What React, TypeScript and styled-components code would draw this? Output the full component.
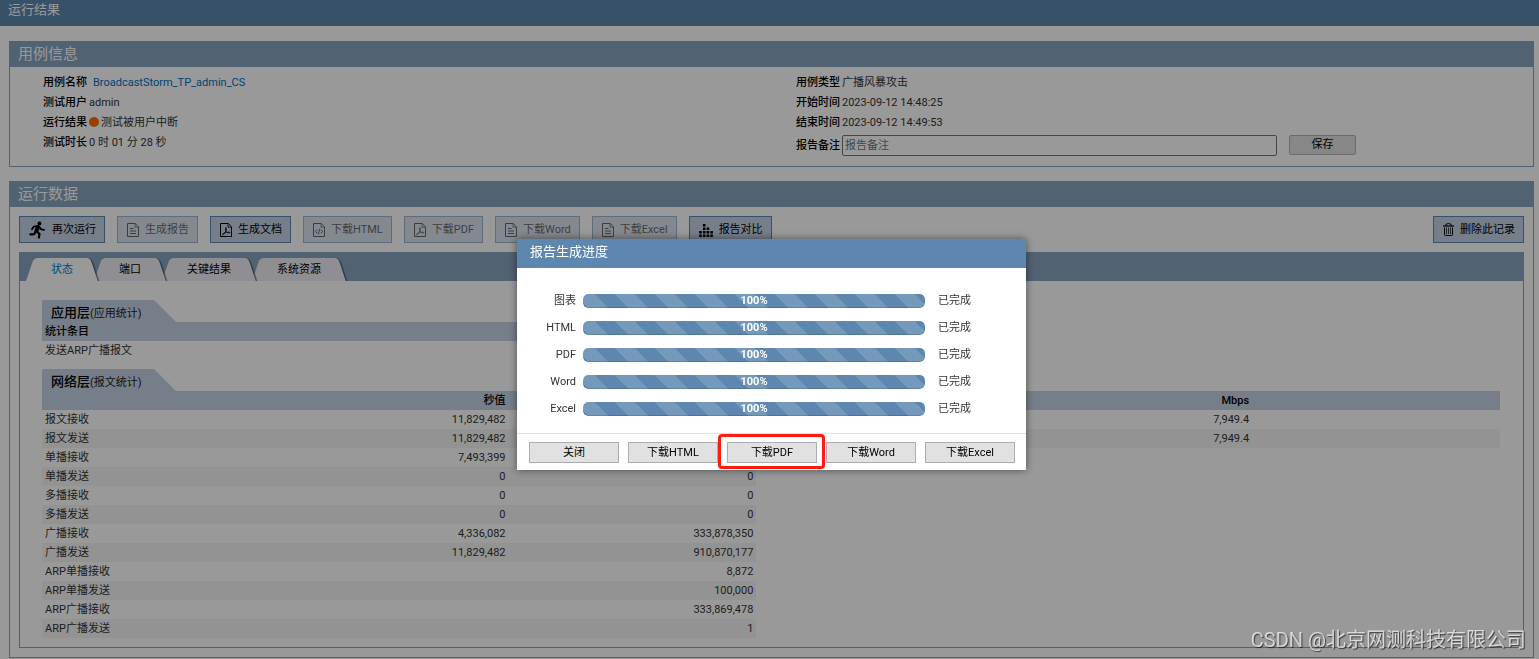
import React from 'react';
import styled, { createGlobalStyle, css } from 'styled-components';

const GlobalStyle = createGlobalStyle`
  *, *::before, *::after { box-sizing: border-box; }
  body {
    margin: 0;
    background: #fff;
    color: #333;
    font-family: Roboto, "Noto Sans CJK SC", sans-serif;
    font-size: 11px;
    line-height: 19px;
  }
  button, input { font: inherit; color: inherit; }
`;

const TopBar = styled.header`
  height: 26px;
  padding: 0 8px;
  background: #5d87af;
`;

const PageTitle = styled.h1`
  margin: 0;
  font-size: 13px;
  font-weight: 400;
  line-height: 20px;
  color: #fff;
`;

const Page = styled.main`
  display: flex;
  flex-direction: column;
  gap: 14px;
  padding: 15px 5px 1px 9px;
`;

const Panel = styled.section`
  border: 1px solid #87a3c0;
`;

const PanelTitle = styled.h2`
  margin: 0;
  padding: 0 8px;
  font-size: 15px;
  font-weight: 400;
  line-height: 25px;
  color: #fff;
  background: #87a3c0;
`;

const InfoGrid = styled.div`
  display: grid;
  grid-template-columns: 1fr 1fr;
  column-gap: 16px;
  padding: 5px 0 8px 33px;
`;

const InfoColumn = styled.div`
  display: flex;
  flex-direction: column;
`;

const InfoRow = styled.div`
  display: flex;
  align-items: center;
  gap: 2px;
  min-height: 20px;
  white-space: nowrap;
`;

const InfoLabel = styled.label`
  font-weight: 500;
  color: #000;
`;

const CaseLink = styled.a`
  padding-left: 4px;
  color: #0070c0;
  text-decoration: none;
`;

const StatusDot = styled.span`
  width: 10px;
  height: 10px;
  border-radius: 50%;
  background: #ff6a00;
`;

const NoteRow = styled(InfoRow)`
  min-height: 26px;
`;

const NoteInput = styled.input`
  flex: 0 1 435px;
  min-width: 0;
  height: 21px;
  padding: 0 2px;
  border: 1px solid #767676;
  border-radius: 2px;
  background: #fff;
  &::placeholder { color: #757575; opacity: 1; }
`;

const SaveButton = styled.button`
  width: 67px;
  height: 20px;
  margin-left: 10px;
  padding: 0;
  border: 1px solid #b2b2b2;
  border-radius: 2px;
  background: #e1e1e1;
  color: #000;
  line-height: 18px;
`;

const PanelBody = styled.div`
  padding: 9px;
`;

const Toolbar = styled.div`
  display: flex;
  gap: 12px;
  margin-bottom: 9px;
`;

const ToolButton = styled.button`
  display: flex;
  align-items: center;
  gap: 6px;
  height: 27px;
  padding: 0 8px 0 9px;
  border: 1px solid #5d87af;
  background: #c5d2e6;
  color: #000;
  white-space: nowrap;
  &:disabled { opacity: 0.6; }
  &:last-child { margin-left: auto; }
`;

const TabPanel = styled.div`
  border: 1px solid #87a3c0;
`;

const TabBar = styled.div`
  display: flex;
  align-items: flex-end;
  height: 28px;
  padding-left: 6px;
  background: #87a3c0;
`;

const Tab = styled.button<{ $active?: boolean; $order: number }>`
  display: flex;
  position: relative;
  z-index: ${p => p.$order};
  height: 23px;
  padding: 0;
  border: 0;
  background: none;
  color: ${p => (p.$active ? '#0078cc' : '#000')};
  --tab: ${p => (p.$active ? '#fff' : '#eeeff5')};
  & + & { margin-left: -5px; }
  svg { display: block; flex: none; overflow: visible; }
`;

const TabText = styled.span`
  padding: 2px 14px 2px 13px;
  line-height: 19px;
  background: var(--tab);
`;

const TabContent = styled.div`
  display: flex;
  flex-direction: column;
  gap: 9px;
  padding: 19px 23px 9px 22px;
`;

const StatBlock = styled.section<{ $half?: boolean }>`
  width: ${p => (p.$half ? '49%' : '100%')};
`;

const StatHeading = styled.h3`
  width: 134px;
  height: 22px;
  margin: 0;
  padding: 3px 0 0 9px;
  border-top-left-radius: 2px;
  background: #c5d2e6;
  clip-path: polygon(0 0, 112px 0, 100% 100%, 0 100%);
  font-size: 13px;
  font-weight: 500;
  line-height: 20px;
  color: #000;
  white-space: nowrap;
  small { font-size: 11px; font-weight: 400; color: #222; }
`;

const StatTable = styled.table`
  width: 100%;
  border-collapse: collapse;
  table-layout: fixed;
`;

const Col = styled.col<{ $share: number }>`
  width: ${p => p.$share}%;
`;

const cell = css`
  height: 19px;
  padding: 0 3px;
  line-height: 19px;
  text-align: right;
  &:first-child { text-align: left; }
`;

const HeadCell = styled.th`
  ${cell}
  background: #c5d2e6;
  font-weight: 500;
  color: #000;
`;

const Cell = styled.td<{ $striped: boolean }>`
  ${cell}
  background: ${p => (p.$striped ? '#f5f5f5' : 'transparent')};
`;

const Overlay = styled.div`
  position: fixed;
  inset: 0;
  z-index: 20;
  display: flex;
  justify-content: center;
  align-items: flex-start;
  padding: 239px 0 0 4px;
  background: rgba(0, 0, 0, 0.4);
`;

const Dialog = styled.div`
  width: 509px;
  background: #fff;
  box-shadow: 0 0 8px rgba(0, 0, 0, 0.5);
`;

const DialogTitle = styled.h2`
  margin: 0;
  padding: 0 13px;
  font-size: 13px;
  font-weight: 400;
  line-height: 26px;
  height: 29px;
  color: #fff;
  background: #5d87af;
`;

const ProgressList = styled.div`
  display: flex;
  flex-direction: column;
  gap: 8px;
  padding: 23px 0 15px;
`;

const ProgressRow = styled.div`
  display: grid;
  grid-template-columns: 59px 342px auto;
  align-items: center;
  column-gap: 7px;
`;

const ProgressLabel = styled.span`
  text-align: right;
`;

const ProgressTrack = styled.div`
  height: 14px;
  margin-top: 1px;
  border-radius: 5px;
  background: #f5f5f5;
  overflow: hidden;
`;

const ProgressFill = styled.div`
  height: 100%;
  background-color: #5d87af;
  background-image: linear-gradient(45deg, rgba(255, 255, 255, 0.15) 25%, transparent 25%, transparent 50%, rgba(255, 255, 255, 0.15) 50%, rgba(255, 255, 255, 0.15) 75%, transparent 75%);
  background-size: 40px 40px;
  background-position: -8px 0;
  box-shadow: inset 0 -1px 0 rgba(0, 0, 0, 0.15);
  border-radius: 5px;
  font-weight: 700;
  line-height: 13px;
  text-align: center;
  color: #fff;
`;

const ProgressState = styled.span`
  padding-left: 6px;
`;

const DialogFooter = styled.footer`
  display: flex;
  gap: 9px;
  padding: 8px 11px 7px 12px;
  border-top: 1px solid #e2e2e2;
`;

const FooterSlot = styled.div`
  position: relative;
  flex: 1;
  display: flex;
`;

const FooterButton = styled.button`
  flex: 1;
  height: 21px;
  padding: 1px 0 0;
  border: 1px solid #adadad;
  background: #e1e1e1;
  color: #000;
  line-height: 18px;
`;

const Highlight = styled.span`
  position: absolute;
  inset: -8px -8px -6px -9px;
  z-index: 1;
  border: 3px solid #ff1d10;
  border-radius: 4px;
  pointer-events: none;
`;

const Watermark = styled.div`
  position: fixed;
  right: 13px;
  bottom: 5px;
  z-index: 30;
  font-size: 20px;
  line-height: 28px;
  color: rgba(255, 255, 255, 0.7);
  text-shadow: 1px 1px 1px rgba(0, 0, 0, 0.6);
`;

const RunIcon = () => (
  <svg width="17" height="18" viewBox="0 0 17 18" fill="none" stroke="#000" strokeLinecap="round" strokeLinejoin="round" aria-hidden="true">
    <circle cx="10.500" cy="2.500" r="2" fill="#000" stroke="none" />
    <path d="M9 6 7.400 10" strokeWidth="4" />
    <path d="M8.500 5.200 4.800 5.600 3 8.200M10.600 6.200l1.600 2.200 2.800.4" strokeWidth="1.800" />
    <path d="m8 10.800 2.500 2-.6 3.700M6.600 10.800l-1.500 2.400-3.700.2" strokeWidth="2.200" />
  </svg>
);

const Sheet = ({ children }: { children: React.ReactNode }) => (
  <svg width="12" height="14" viewBox="0 0 12 14" fill="none" stroke="#000" aria-hidden="true">
    <path d="M.5.5h7.700l3.300 3.300v9.700H.5z" />
    <path d="M8 .8v3.400h3.400" strokeWidth=".8" />
    {children}
  </svg>
);

const DocIcon = () => <Sheet><path d="M3 5.500h3.500M3 8h6M3 10.500h6" /></Sheet>;
const PdfIcon = () => (
  <Sheet>
    <path d="M2.400 11.800c.3-1.600 3.200-2.500 6.800-2.600.8.1.9.8.1.9C7 9.800 5.500 8 5.500 5.200c.1-.9.9-.9.9 0C6.200 8 4.500 11.500 2.400 11.800z" strokeWidth=".8" />
  </Sheet>
);
const HtmlIcon = () => <Sheet><path d="M4.200 6.600 2.500 8.500l1.700 1.900M7.800 6.600l1.700 1.900-1.700 1.900M6.600 5.800l-1.200 5.400" /></Sheet>;

const BarsIcon = () => (
  <svg width="14" height="14" viewBox="0 0 14 14" stroke="#000" strokeWidth="2.600" strokeDasharray="2.600 .9" aria-hidden="true">
    <path d="M1.500 14V8M5.200 14V1M8.900 14V4.500M12.600 14V8" />
  </svg>
);

const TrashIcon = () => (
  <svg width="11" height="13" viewBox="0 0 11 13" fill="none" stroke="#000" aria-hidden="true">
    <path d="M0 3h11" strokeWidth="1.200" />
    <path d="M2.500 3q0-2.500 3-2.500t3 2.500M1.500 4.500v7q0 1 1 1h6q1 0 1-1v-7" />
    <path d="M3.500 4.500v6.500M5.500 4.500v6.500M7.500 4.500v6.500" strokeWidth=".7" />
  </svg>
);

const LeftCap = () => (
  <svg width="12" height="23" viewBox="0 0 12 23" aria-hidden="true">
    <path d="M0 23 6.500 4Q8 0 12 0V23z" fill="var(--tab)" />
  </svg>
);

const RightCap = () => (
  <svg width="12" height="23" viewBox="0 0 12 23" aria-hidden="true">
    <path d="M1 0Q5 1 7 6L12.500 23H9z" fill="#223850" opacity=".35" />
    <path d="M0 0Q4 0 5.500 4L11.800 23H0z" fill="#223850" opacity=".45" />
    <path d="M0 0Q3 0 4.500 4L10.800 23H0z" fill="var(--tab)" />
  </svg>
);

const tools = [
  { text: '再次运行', icon: <RunIcon />, off: false },
  { text: '生成报告', icon: <DocIcon />, off: true },
  { text: '生成文档', icon: <PdfIcon />, off: false },
  { text: '下载HTML', icon: <HtmlIcon />, off: true },
  { text: '下载PDF', icon: <PdfIcon />, off: true },
  { text: '下载Word', icon: <DocIcon />, off: true },
  { text: '下载Excel', icon: <DocIcon />, off: true },
  { text: '报告对比', icon: <BarsIcon />, off: false },
  { text: '删除此记录', icon: <TrashIcon />, off: false },
];

const tabs = ['状态', '端口', '关键结果', '系统资源'];

const packetRows: string[][] = [
  ['报文接收', '11,829,482', '', '', '7,949.4', ''],
  ['报文发送', '11,829,482', '', '', '7,949.4', ''],
  ['单播接收', '7,493,399', ''],
  ['单播发送', '0', '0'],
  ['多播接收', '0', '0'],
  ['多播发送', '0', '0'],
  ['广播接收', '4,336,082', '333,878,350'],
  ['广播发送', '11,829,482', '910,870,177'],
  ['ARP单播接收', '', '8,872'],
  ['ARP单播发送', '', '100,000'],
  ['ARP广播接收', '', '333,869,478'],
  ['ARP广播发送', '', '1'],
];

const exportsInProgress = ['图表', 'HTML', 'PDF', 'Word', 'Excel'];
const footerActions = ['关闭', '下载HTML', '下载PDF', '下载Word', '下载Excel'];

export default function App() {
  return (
    <>
      <GlobalStyle />
      <TopBar><PageTitle>运行结果</PageTitle></TopBar>
      <Page>
        <Panel>
          <PanelTitle>用例信息</PanelTitle>
          <InfoGrid>
            <InfoColumn>
              <InfoRow><InfoLabel as="span">用例名称</InfoLabel><CaseLink href="#case">BroadcastStorm_TP_admin_CS</CaseLink></InfoRow>
              <InfoRow><InfoLabel as="span">测试用户</InfoLabel><span>admin</span></InfoRow>
              <InfoRow><InfoLabel as="span">运行结果</InfoLabel><StatusDot /><span>测试被用户中断</span></InfoRow>
              <InfoRow><InfoLabel as="span">测试时长</InfoLabel><span>0 时 01 分 28 秒</span></InfoRow>
            </InfoColumn>
            <InfoColumn>
              <InfoRow><InfoLabel as="span">用例类型</InfoLabel><span>广播风暴攻击</span></InfoRow>
              <InfoRow><InfoLabel as="span">开始时间</InfoLabel><span>2023-09-12 14:48:25</span></InfoRow>
              <InfoRow><InfoLabel as="span">结束时间</InfoLabel><span>2023-09-12 14:49:53</span></InfoRow>
              <NoteRow>
                <InfoLabel htmlFor="note">报告备注</InfoLabel>
                <NoteInput id="note" type="text" placeholder="报告备注" />
                <SaveButton type="button">保存</SaveButton>
              </NoteRow>
            </InfoColumn>
          </InfoGrid>
        </Panel>

        <Panel>
          <PanelTitle>运行数据</PanelTitle>
          <PanelBody>
            <Toolbar>
              {tools.map(t => (
                <ToolButton key={t.text} type="button" disabled={t.off}>{t.icon}{t.text}</ToolButton>
              ))}
            </Toolbar>
            <TabPanel>
              <TabBar role="tablist">
                {tabs.map((t, i) => (
                  <Tab key={t} type="button" role="tab" aria-selected={i === 0} $active={i === 0} $order={tabs.length - i}>
                    <LeftCap /><TabText>{t}</TabText><RightCap />
                  </Tab>
                ))}
              </TabBar>
              <TabContent>
                <StatBlock $half>
                  <StatHeading>应用层<small>(应用统计)</small></StatHeading>
                  <StatTable>
                    <thead><tr><HeadCell>统计条目</HeadCell></tr></thead>
                    <tbody><tr><Cell $striped={false}>发送ARP广播报文</Cell></tr></tbody>
                  </StatTable>
                </StatBlock>
                <StatBlock>
                  <StatHeading>网络层<small>(报文统计)</small></StatHeading>
                  <StatTable>
                    <colgroup>
                      <Col $share={15} /><Col $share={17} /><Col $share={17} /><Col $share={17} /><Col $share={17} /><Col $share={17} />
                    </colgroup>
                    <thead>
                      <tr><HeadCell /><HeadCell>秒值</HeadCell><HeadCell /><HeadCell /><HeadCell>Mbps</HeadCell><HeadCell /></tr>
                    </thead>
                    <tbody>
                      {packetRows.map((row, r) => (
                        <tr key={row[0]}>
                          {row.map((value, c) => <Cell key={c} $striped={r % 2 === 1}>{value}</Cell>)}
                        </tr>
                      ))}
                    </tbody>
                  </StatTable>
                </StatBlock>
              </TabContent>
            </TabPanel>
          </PanelBody>
        </Panel>
      </Page>

      <Overlay>
        <Dialog role="dialog" aria-modal="true" aria-labelledby="dialog-title">
          <DialogTitle id="dialog-title">报告生成进度</DialogTitle>
          <ProgressList>
            {exportsInProgress.map(name => (
              <ProgressRow key={name}>
                <ProgressLabel>{name}</ProgressLabel>
                <ProgressTrack role="progressbar" aria-label={name} aria-valuenow={100}>
                  <ProgressFill>100%</ProgressFill>
                </ProgressTrack>
                <ProgressState>已完成</ProgressState>
              </ProgressRow>
            ))}
          </ProgressList>
          <DialogFooter>
            {footerActions.map(name => (
              <FooterSlot key={name}>
                <FooterButton type="button">{name}</FooterButton>
                {name === '下载PDF' && <Highlight />}
              </FooterSlot>
            ))}
          </DialogFooter>
        </Dialog>
      </Overlay>
      <Watermark>CSDN @北京网测科技有限公司</Watermark>
    </>
  );
}
